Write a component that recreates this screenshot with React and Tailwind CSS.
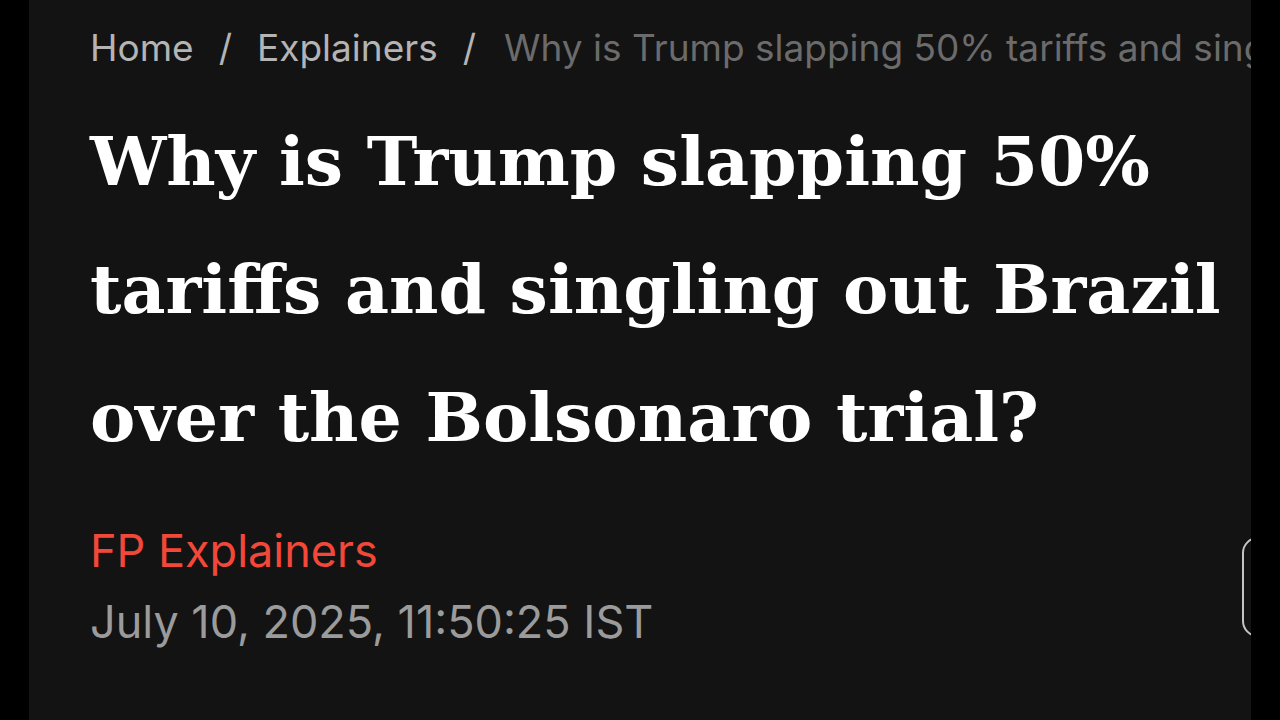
export default function App() {
  return (
    <div className="w-[1280px] h-[720px] bg-black flex overflow-hidden">
      <div className="ml-[29px] w-[1222px] h-full bg-[#131313] overflow-hidden pl-[61px] flex flex-col">
        <div
          className="pt-[24px] h-[73px] shrink-0 flex items-start whitespace-nowrap text-[37px] leading-[48px]"
          style={{ fontFamily: 'Inter, "Liberation Sans", sans-serif' }}
        >
          <span className="text-[#b4b4b4]">Home</span>
          <span className="text-[#b4b4b4] mx-[25px]">/</span>
          <span className="text-[#b4b4b4]">Explainers</span>
          <span className="text-[#b4b4b4] ml-[25px] mr-[28px]">/</span>
          <span className="text-[#6b6b6b]">Why is Trump slapping 50% tariffs and singling out Brazil over the Bolsonaro trial?</span>
        </div>
        <h1
          className="mt-[24px] shrink-0 whitespace-nowrap text-white font-bold text-[68px] leading-[128px]"
          style={{ fontFamily: '"DejaVu Serif", "Liberation Serif", serif' }}
        >
          Why is Trump slapping 50%<br />
          tariffs and singling out Brazil<br />
          over the Bolsonaro trial?
        </h1>
        <div className="mt-[46px] shrink-0 flex items-center">
          <div
            className="flex flex-col"
            style={{ fontFamily: 'Inter, "Liberation Sans", sans-serif' }}
          >
            <span className="text-[#f2483a] text-[45px] leading-[48px]">FP Explainers</span>
            <span className="text-[#9b9b9b] text-[45px] leading-[48px] mt-[23px]">July 10, 2025, 11:50:25 IST</span>
          </div>
          <div className="ml-auto -mr-[51px] w-[60px] h-[100px] shrink-0 rounded-[16px] border-2 border-[#c4c4c4]" />
        </div>
      </div>
    </div>
  );
}
